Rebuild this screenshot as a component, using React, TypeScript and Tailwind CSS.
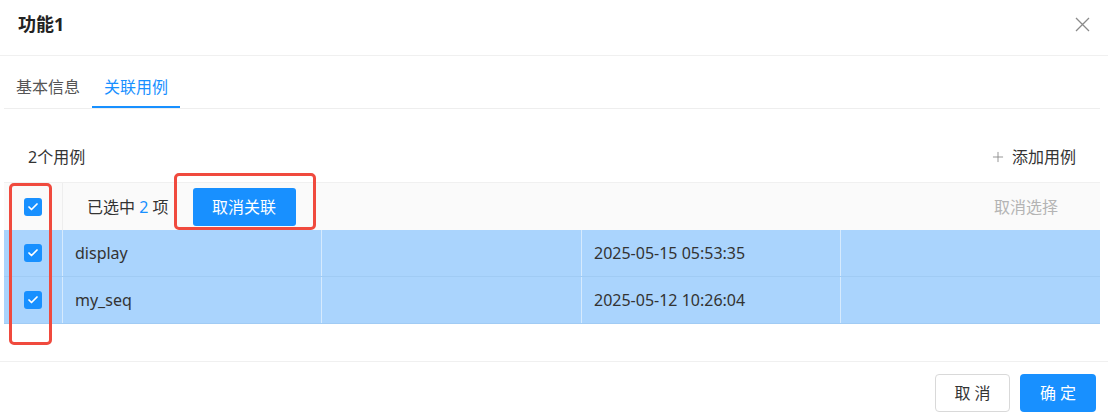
import { Plus, Check } from "lucide-react";

const rows = [
  { name: "display", time: "2025-05-15 05:53:35" },
  { name: "my_seq", time: "2025-05-12 10:26:04" },
];

function CheckBox() {
  return (
    <span className="flex h-[18px] w-[18px] items-center justify-center rounded-[3px] bg-[#1890ff]">
      <Check className="h-[12px] w-[12px] text-white" strokeWidth={3.5} />
    </span>
  );
}

export default function App() {
  return (
    <div className="relative h-[420px] w-[1108px] overflow-hidden bg-white font-['Noto_Sans','Noto_Sans_CJK_SC',sans-serif] text-[16px] text-[#333]">
      {/* Header */}
      <div className="flex h-[56px] items-start justify-between border-b border-[#f0f0f0] pl-[18px] pr-[18px] pt-[10px]">
        <h1 className="text-[18px] font-bold leading-[28px] text-[#222]">功能1</h1>
        <svg className="mt-[7px] h-[15px] w-[15px] text-[#8a8a8a]" viewBox="0 0 15 15" fill="none" stroke="currentColor" strokeWidth={1.3}>
          <path d="M1 1 L14 14 M14 1 L1 14" />
        </svg>
      </div>

      {/* Tabs */}
      <div className="ml-1 mr-2 flex h-[53px] items-end border-b border-[#eeeeee]">
        <div className="border-b-2 border-transparent px-3 pb-[7px] leading-6 text-[#555]">基本信息</div>
        <div className="border-b-2 border-[#1890ff] px-3 pb-[7px] leading-6 text-[#1890ff]">关联用例</div>
      </div>

      {/* Toolbar */}
      <div className="ml-1 mr-2 flex items-center justify-between px-6 pb-[13px] pt-[36px] leading-6">
        <span>2个用例</span>
        <span className="flex items-center gap-[6px]">
          <Plus className="h-[16px] w-[16px] text-[#888]" strokeWidth={1.3} />
          添加用例
        </span>
      </div>

      {/* Table */}
      <div className="ml-1 mr-2">
        <div className="flex h-[48px] border-t border-[#f0f0f0] bg-[#fafafa]">
          <div className="flex w-[59px] items-center justify-center border-r border-[#eeeeee]">
            <CheckBox />
          </div>
          <div className="flex flex-1 items-center justify-between pl-6 pr-[42px]">
            <div className="flex items-center">
              <span>
                已选中 <span className="text-[#1890ff]">2</span> 项
              </span>
              <button className="ml-6 h-[38px] w-[103px] rounded-[3px] bg-[#1890ff] text-white">取消关联</button>
            </div>
            <span className="text-[#b4b4b4]">取消选择</span>
          </div>
        </div>
        {rows.map((r) => (
          <div key={r.name} className="flex h-[47px] border-b border-[#a0cbf4] bg-[#aad4fd]">
            <div className="flex w-[59px] items-center justify-center border-r border-[#d6eafd]">
              <CheckBox />
            </div>
            <div className="flex w-[259px] items-center border-r border-[#d6eafd] pl-3">{r.name}</div>
            <div className="w-[260px] border-r border-[#d6eafd]" />
            <div className="flex w-[259px] items-center border-r border-[#d6eafd] pl-3">{r.time}</div>
            <div className="flex-1" />
          </div>
        ))}
      </div>

      {/* Footer */}
      <div className="mt-[37px] flex justify-end gap-[10px] border-t border-[#f0f0f0] pr-[12px] pt-[12px]">
        <button className="h-[38px] w-[75px] rounded-[4px] border border-[#d9d9d9] bg-white pl-[4px] tracking-[4px] text-[#333]">取消</button>
        <button className="h-[38px] w-[76px] rounded-[4px] bg-[#1890ff] pl-[4px] tracking-[4px] text-white">确定</button>
      </div>

      {/* Annotation boxes */}
      <div className="absolute left-[9px] top-[183px] h-[162px] w-[43px] rounded-[5px] border-[3px] border-[#f04a3e]" />
      <div className="absolute left-[174px] top-[173px] h-[57px] w-[142px] rounded-[5px] border-[3px] border-[#f04a3e]" />
    </div>
  );
}
